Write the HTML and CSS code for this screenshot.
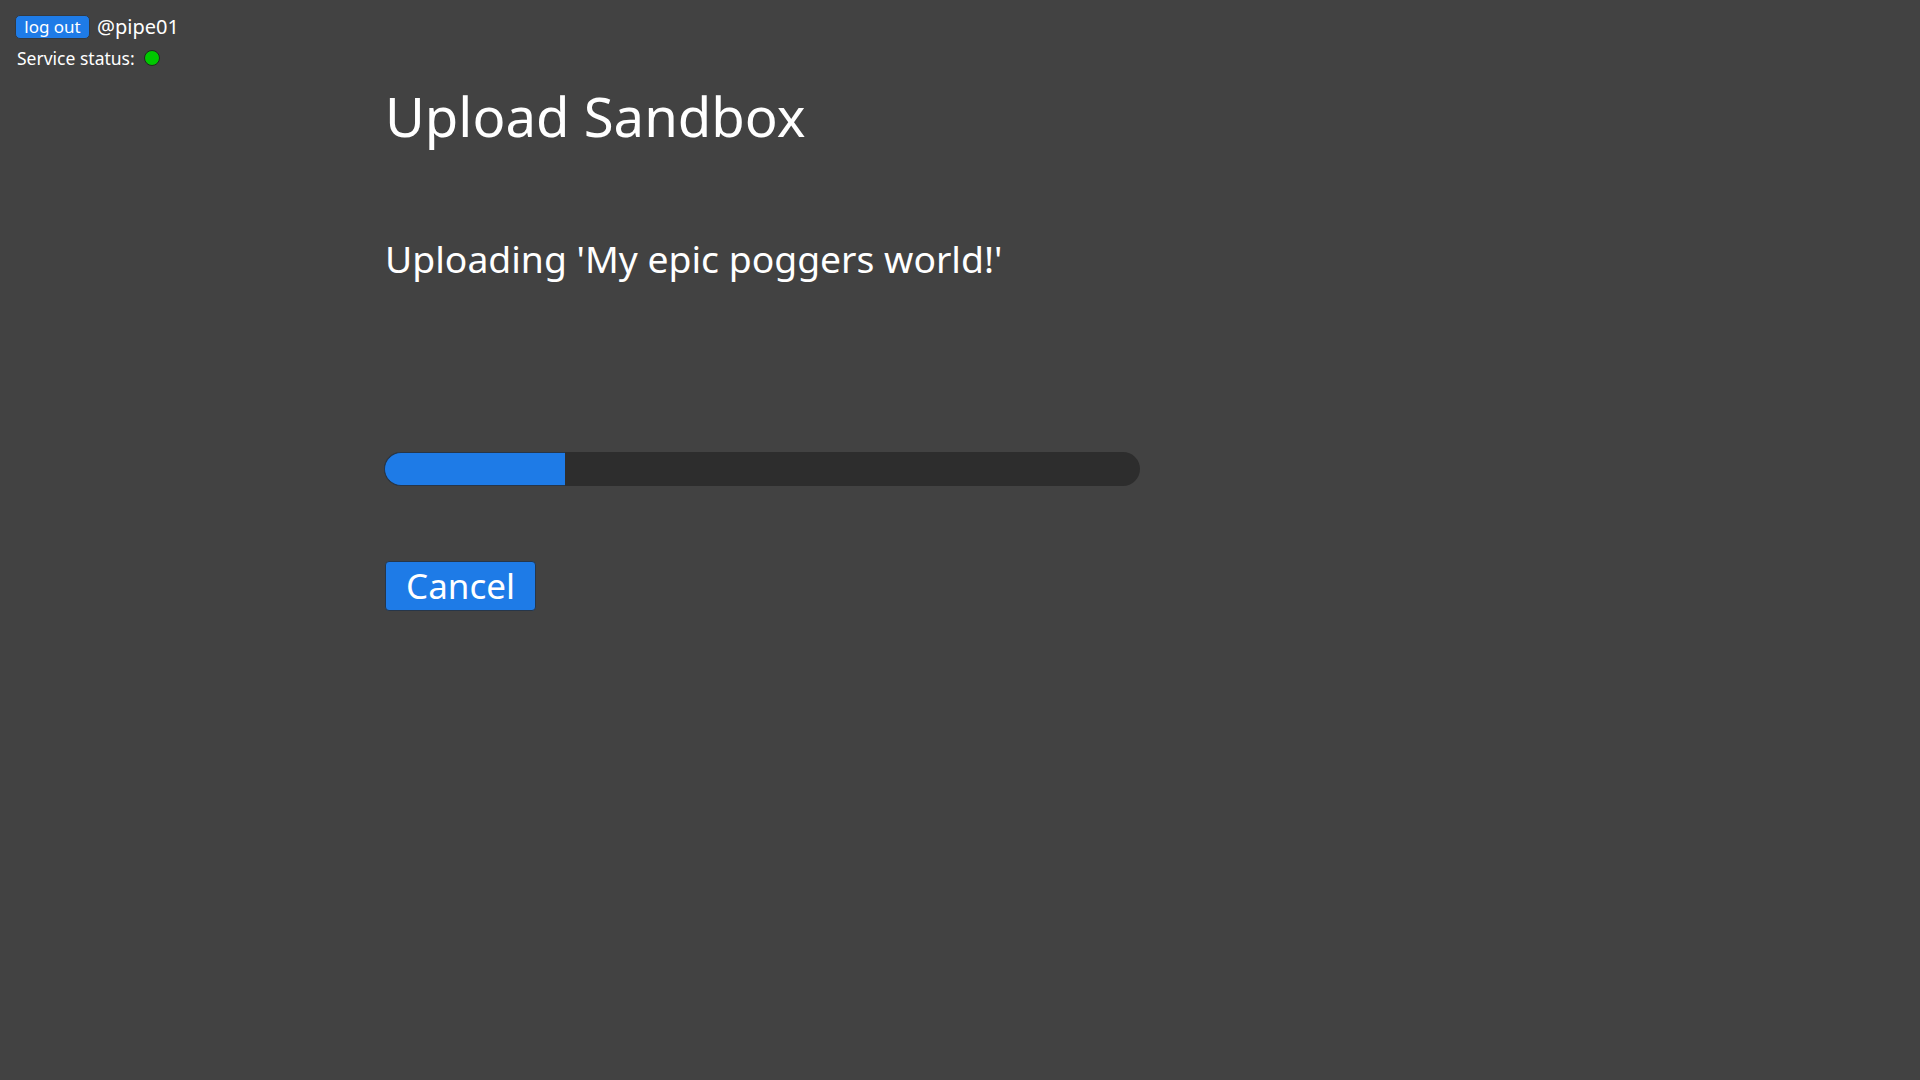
FILE: index.html
```html
<!DOCTYPE html>
<html lang="en">
<head>
<meta charset="utf-8">
<title>Upload Sandbox</title>
<link rel="stylesheet" href="styles.css">
</head>
<body>
<div class="page">
  <header class="header">
    <div class="user-row">
      <button class="logout-btn">log out</button>
      <span class="username">@pipe01</span>
    </div>
    <div class="status-row">
      <span class="status-label">Service status:</span>
      <span class="status-dot"></span>
    </div>
  </header>
  <main class="main">
    <h1 class="title">Upload Sandbox</h1>
    <p class="subtitle">Uploading 'My epic poggers world!'</p>
    <div class="progress">
      <div class="progress-fill" style="width: 24%"></div>
    </div>
    <button class="cancel-btn">Cancel</button>
  </main>
</div>
</body>
</html>
```
FILE: styles.css
```css
html, body {
  margin: 0;
  padding: 0;
  height: 100%;
}
body {
  background: #424242;
  color: #ffffff;
  font-family: "Noto Sans", "Open Sans", sans-serif;
}
.page {
  display: flex;
  flex-direction: column;
  min-height: 100vh;
}
.header {
  padding: 15px 0 0 15px;
  display: flex;
  flex-direction: column;
  gap: 9px;
}
.user-row {
  display: flex;
  align-items: center;
  gap: 7px;
  height: 24px;
}
.logout-btn {
  box-sizing: border-box;
  height: 24px;
  width: 75px;
  padding: 0;
  margin: 0;
  background: #1e7be7;
  color: #ffffff;
  border: 1px solid #333940;
  border-radius: 5px;
  font-family: inherit;
  font-size: 17px;
  line-height: 20px;
}
.username {
  font-size: 20px;
  line-height: 24px;
}
.status-row {
  display: flex;
  align-items: center;
  gap: 9px;
  height: 20px;
  padding-left: 2px;
}
.status-label {
  font-size: 17.5px;
  line-height: 20px;
}
.status-dot {
  box-sizing: border-box;
  width: 16px;
  height: 16px;
  border-radius: 50%;
  background: #00c800;
  border: 1px solid #1e2a1e;
}
.main {
  padding-left: 385px;
  display: flex;
  flex-direction: column;
  align-items: flex-start;
}
.title {
  margin: 21px 0 0 0;
  font-size: 54.5px;
  line-height: 55px;
  font-weight: 400;
}
.subtitle {
  margin: 96px 0 0 0;
  font-size: 37.3px;
  line-height: 37px;
}
.progress {
  margin-top: 175px;
  margin-left: -1px;
  width: 756px;
  height: 34px;
  border-radius: 17px;
  background: #2d2d2d;
  overflow: hidden;
  display: flex;
}
.progress-fill {
  box-sizing: border-box;
  height: 100%;
  background: #1e7be7;
  border: 1px solid #26364a;
  border-right: none;
  border-radius: 17px 0 0 17px;
}
.cancel-btn {
  box-sizing: border-box;
  margin-top: 75px;
  width: 151px;
  height: 50px;
  padding: 0;
  background: #1e7be7;
  color: #ffffff;
  border: 1px solid #26364a;
  border-radius: 4px;
  font-family: inherit;
  font-size: 35px;
  line-height: 46px;
}
```
